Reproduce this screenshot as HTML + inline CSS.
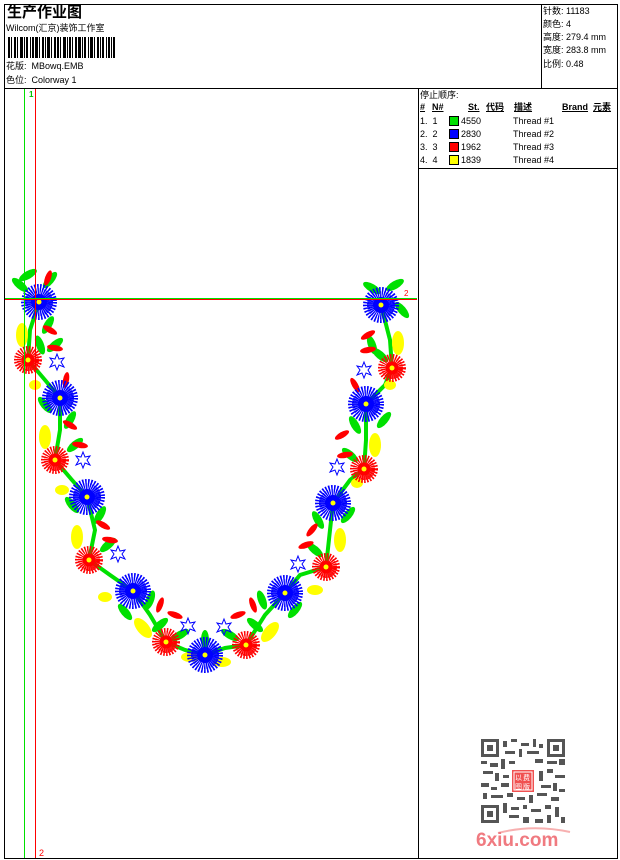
<!DOCTYPE html>
<html><head><meta charset="utf-8"><style>
body{margin:0;width:620px;height:860px;background:#fff;position:relative;overflow:hidden;font-family:"Liberation Sans","Noto Sans CJK SC",sans-serif;font-size:9px;color:#000}
.a{position:absolute;white-space:nowrap;line-height:11px}
.l{position:absolute;background:#000}
.b{font-weight:bold;text-decoration:underline}
.sw{position:absolute;width:8px;height:8px;border:1px solid #000}
</style></head><body>
<div class="l" style="left:4px;top:4px;width:614px;height:1px"></div>
<div class="l" style="left:4px;top:858px;width:614px;height:1px"></div>
<div class="l" style="left:4px;top:4px;width:1px;height:855px"></div>
<div class="l" style="left:617px;top:4px;width:1px;height:855px"></div>
<div class="l" style="left:4px;top:88px;width:614px;height:1px"></div>
<div class="l" style="left:541px;top:4px;width:1px;height:84px"></div>
<div class="l" style="left:418px;top:88px;width:1px;height:771px"></div>
<div class="l" style="left:418px;top:168px;width:200px;height:1px"></div>

<div class="a" style="left:7px;top:4px;font-size:15px;font-weight:bold;line-height:17px">生产作业图</div>
<div class="a" style="left:6px;top:23px">Wilcom(汇京)装饰工作室</div>
<svg style="position:absolute;left:8px;top:37px" width="110" height="21">
<g fill="#000">
<rect x="0" width="2" height="21"/><rect x="3" width="1" height="21"/><rect x="6" width="2" height="21"/><rect x="9" width="1" height="21"/><rect x="12" width="3" height="21"/><rect x="16" width="1" height="21"/><rect x="18" width="2" height="21"/><rect x="22" width="1" height="21"/><rect x="24" width="2" height="21"/><rect x="27" width="3" height="21"/><rect x="31" width="1" height="21"/><rect x="34" width="2" height="21"/><rect x="37" width="1" height="21"/><rect x="39" width="3" height="21"/><rect x="43" width="1" height="21"/><rect x="46" width="2" height="21"/><rect x="49" width="2" height="21"/><rect x="52" width="1" height="21"/><rect x="55" width="3" height="21"/><rect x="59" width="1" height="21"/><rect x="61" width="2" height="21"/><rect x="64" width="1" height="21"/><rect x="67" width="2" height="21"/><rect x="70" width="3" height="21"/><rect x="74" width="1" height="21"/><rect x="76" width="2" height="21"/><rect x="80" width="1" height="21"/><rect x="82" width="3" height="21"/><rect x="86" width="1" height="21"/><rect x="89" width="2" height="21"/><rect x="92" width="1" height="21"/><rect x="94" width="2" height="21"/><rect x="98" width="1" height="21"/><rect x="100" width="2" height="21"/><rect x="103" width="1" height="21"/><rect x="105" width="2" height="21"/>
</g></svg>
<div class="a" style="left:6px;top:61px">花版: &nbsp;MBowq.EMB</div>
<div class="a" style="left:6px;top:75px">色位: &nbsp;Colorway 1</div>

<div class="a" style="left:543px;top:6px">针数: 11183</div>
<div class="a" style="left:543px;top:19px">颜色: 4</div>
<div class="a" style="left:543px;top:32px">高度: 279.4 mm</div>
<div class="a" style="left:543px;top:45px">宽度: 283.8 mm</div>
<div class="a" style="left:543px;top:59px">比例: 0.48</div>

<div class="a" style="left:420px;top:90px">停止顺序:</div>
<div class="a b" style="left:420px;top:102px">#</div>
<div class="a b" style="left:432px;top:102px">N#</div>
<div class="a b" style="left:468px;top:102px">St.</div>
<div class="a b" style="left:486px;top:102px">代码</div>
<div class="a b" style="left:514px;top:102px">描述</div>
<div class="a b" style="left:562px;top:102px">Brand</div>
<div class="a b" style="left:593px;top:102px">元素</div>
<div class="a" style="left:420px;top:116px">1. &nbsp;1</div><div class="sw" style="left:449px;top:116px;background:#00e000"></div><div class="a" style="left:461px;top:116px">4550</div><div class="a" style="left:513px;top:116px">Thread #1</div>
<div class="a" style="left:420px;top:129px">2. &nbsp;2</div><div class="sw" style="left:449px;top:129px;background:#0000ff"></div><div class="a" style="left:461px;top:129px">2830</div><div class="a" style="left:513px;top:129px">Thread #2</div>
<div class="a" style="left:420px;top:142px">3. &nbsp;3</div><div class="sw" style="left:449px;top:142px;background:#ff0000"></div><div class="a" style="left:461px;top:142px">1962</div><div class="a" style="left:513px;top:142px">Thread #3</div>
<div class="a" style="left:420px;top:155px">4. &nbsp;4</div><div class="sw" style="left:449px;top:155px;background:#ffff00"></div><div class="a" style="left:461px;top:155px">1839</div><div class="a" style="left:513px;top:155px">Thread #4</div>

<svg style="position:absolute;left:0;top:0" width="418" height="858">
<defs>
<g id="bf"><circle r="10" fill="none" stroke="#0000ff" stroke-width="16" stroke-dasharray="1 0.9"/><circle r="9" fill="none" stroke="#0000ff" stroke-width="10" stroke-dasharray="0.8 0.8" transform="rotate(7)"/><circle r="8" fill="#0000ff"/><circle r="2.5" fill="#ffff00"/></g>
<g id="rf"><circle r="8" fill="none" stroke="#ff0000" stroke-width="12" stroke-dasharray="1 0.9"/><circle r="7" fill="none" stroke="#ff0000" stroke-width="8" stroke-dasharray="0.8 0.8" transform="rotate(9)"/><circle r="6.5" fill="#ff0000"/><circle r="2.5" fill="#ffff00"/></g>
<polygon id="st" points="0,-8 2,-3 7,-4 4,0 7,5 2,3 0,8 -2,3 -7,5 -4,0 -7,-4 -2,-3" fill="none" stroke="#0000ff" stroke-width="1"/>
<ellipse id="yb" rx="6" ry="12" fill="#ffff00"/>
<ellipse id="lf" rx="4" ry="10" fill="#00e000"/>
<ellipse id="rl" rx="3" ry="8" fill="#ff0000"/>
</defs>
<polyline fill="none" stroke="#00e000" stroke-width="4" points="39,302 30,330 28,360 45,380 60,398 60,430 55,460 72,480 87,497 95,530 89,560 110,575 133,591 150,615 166,642 185,650 205,655 225,648 246,645 265,615 285,593 300,575 326,567 330,530 333,503 350,480 364,469 366,440 366,404 385,385 392,368 390,340 381,305"/>
<g>
<use href="#lf" x="20" y="285" transform="rotate(-50 20 285)"/><use href="#lf" x="28" y="275" transform="rotate(60 28 275)"/><use href="#lf" x="50" y="280" transform="rotate(40 50 280)"/><use href="#lf" x="48" y="325" transform="rotate(30 48 325)"/><use href="#lf" x="40" y="345" transform="rotate(-20 40 345)"/><use href="#lf" x="70" y="420" transform="rotate(30 70 420)"/><use href="#lf" x="45" y="405" transform="rotate(-40 45 405)"/><use href="#lf" x="100" y="515" transform="rotate(30 100 515)"/><use href="#lf" x="72" y="505" transform="rotate(-40 72 505)"/><use href="#lf" x="150" y="600" transform="rotate(20 150 600)"/><use href="#lf" x="125" y="612" transform="rotate(-40 125 612)"/><use href="#lf" x="180" y="635" transform="rotate(60 180 635)"/><use href="#lf" x="205" y="640" transform="rotate(0 205 640)"/><use href="#lf" x="230" y="635" transform="rotate(-60 230 635)"/><use href="#lf" x="262" y="600" transform="rotate(-20 262 600)"/><use href="#lf" x="295" y="610" transform="rotate(40 295 610)"/><use href="#lf" x="318" y="520" transform="rotate(-30 318 520)"/><use href="#lf" x="348" y="515" transform="rotate(40 348 515)"/><use href="#lf" x="355" y="425" transform="rotate(-30 355 425)"/><use href="#lf" x="384" y="420" transform="rotate(40 384 420)"/><use href="#lf" x="372" y="345" transform="rotate(-20 372 345)"/><use href="#lf" x="395" y="285" transform="rotate(60 395 285)"/><use href="#lf" x="402" y="310" transform="rotate(-40 402 310)"/><use href="#lf" x="372" y="288" transform="rotate(-60 372 288)"/>
<use href="#lf" x="55" y="345" transform="rotate(50 55 345)"/><use href="#lf" x="75" y="445" transform="rotate(50 75 445)"/><use href="#lf" x="108" y="545" transform="rotate(50 108 545)"/><use href="#lf" x="160" y="625" transform="rotate(50 160 625)"/><use href="#lf" x="255" y="625" transform="rotate(-50 255 625)"/><use href="#lf" x="315" y="550" transform="rotate(-50 315 550)"/><use href="#lf" x="350" y="455" transform="rotate(-50 350 455)"/><use href="#lf" x="380" y="355" transform="rotate(-50 380 355)"/>
</g>
<g>
<use href="#rl" x="50" y="330" transform="rotate(-60 50 330)"/><use href="#rl" x="55" y="348" transform="rotate(-80 55 348)"/><use href="#rl" x="48" y="278" transform="rotate(20 48 278)"/><use href="#rl" x="70" y="425" transform="rotate(-60 70 425)"/><use href="#rl" x="80" y="445" transform="rotate(-80 80 445)"/><use href="#rl" x="66" y="380" transform="rotate(10 66 380)"/><use href="#rl" x="103" y="525" transform="rotate(-60 103 525)"/><use href="#rl" x="110" y="540" transform="rotate(-80 110 540)"/><use href="#rl" x="160" y="605" transform="rotate(20 160 605)"/><use href="#rl" x="175" y="615" transform="rotate(-70 175 615)"/><use href="#rl" x="238" y="615" transform="rotate(70 238 615)"/><use href="#rl" x="253" y="605" transform="rotate(-20 253 605)"/><use href="#rl" x="306" y="545" transform="rotate(70 306 545)"/><use href="#rl" x="312" y="530" transform="rotate(40 312 530)"/><use href="#rl" x="342" y="435" transform="rotate(60 342 435)"/><use href="#rl" x="345" y="455" transform="rotate(80 345 455)"/><use href="#rl" x="368" y="335" transform="rotate(60 368 335)"/><use href="#rl" x="368" y="350" transform="rotate(80 368 350)"/><use href="#rl" x="355" y="385" transform="rotate(-30 355 385)"/>
</g>
<g>
<use href="#yb" x="22" y="335"/><use href="#yb" x="45" y="437"/><use href="#yb" x="77" y="537"/><use href="#yb" x="143" y="628" transform="rotate(-40 143 628)"/><use href="#yb" x="270" y="632" transform="rotate(40 270 632)"/><use href="#yb" x="340" y="540"/><use href="#yb" x="375" y="445"/><use href="#yb" x="398" y="343"/>
<ellipse cx="35" cy="385" rx="6" ry="5" fill="#ffff00"/><ellipse cx="62" cy="490" rx="7" ry="5" fill="#ffff00"/><ellipse cx="105" cy="597" rx="7" ry="5" fill="#ffff00"/><ellipse cx="190" cy="657" rx="9" ry="5" fill="#ffff00"/><ellipse cx="222" cy="662" rx="9" ry="5" fill="#ffff00"/><ellipse cx="315" cy="590" rx="8" ry="5" fill="#ffff00"/><ellipse cx="357" cy="483" rx="6" ry="5" fill="#ffff00"/><ellipse cx="390" cy="385" rx="6" ry="5" fill="#ffff00"/>
</g>
<g>
<use href="#st" x="57" y="362"/><use href="#st" x="83" y="460"/><use href="#st" x="118" y="554"/><use href="#st" x="188" y="626"/><use href="#st" x="224" y="627"/><use href="#st" x="298" y="564"/><use href="#st" x="337" y="467"/><use href="#st" x="364" y="370"/>
</g>
<g>
<use href="#rf" x="28" y="360"/><use href="#rf" x="55" y="460"/><use href="#rf" x="89" y="560"/><use href="#rf" x="166" y="642"/><use href="#rf" x="246" y="645"/><use href="#rf" x="326" y="567"/><use href="#rf" x="364" y="469"/><use href="#rf" x="392" y="368"/>
</g>
<g>
<use href="#bf" x="39" y="302"/><use href="#bf" x="60" y="398"/><use href="#bf" x="87" y="497"/><use href="#bf" x="133" y="591"/><use href="#bf" x="205" y="655"/><use href="#bf" x="285" y="593"/><use href="#bf" x="333" y="503"/><use href="#bf" x="366" y="404"/><use href="#bf" x="381" y="305"/>
</g>
<rect x="24" y="89" width="1" height="769" fill="#00e000"/>
<rect x="35" y="89" width="1" height="769" fill="#ff0000"/>
<rect x="5" y="298" width="412" height="1" fill="#00e000"/>
<rect x="5" y="299" width="412" height="1" fill="#ff0000"/>
<text x="29" y="97" font-size="8" font-weight="bold" fill="#00c000" font-family="Liberation Sans">1</text>
<text x="39" y="856" font-size="9" fill="#ff0000" font-family="Liberation Sans">2</text>
<text x="404" y="296" font-size="8" fill="#ff0000" font-family="Liberation Sans">2</text>
</svg>

<svg style="position:absolute;left:481px;top:739px" width="84" height="84">
<g fill="#555">
<rect x="0" y="0" width="18" height="18"/><rect x="66" y="0" width="18" height="18"/><rect x="0" y="66" width="18" height="18"/>
</g>
<g fill="#fff"><rect x="3" y="3" width="12" height="12"/><rect x="69" y="3" width="12" height="12"/><rect x="3" y="69" width="12" height="12"/></g>
<g fill="#555"><rect x="6" y="6" width="6" height="6"/><rect x="72" y="6" width="6" height="6"/><rect x="6" y="72" width="6" height="6"/>
<rect x="22" y="2" width="4" height="6"/><rect x="30" y="0" width="6" height="3"/><rect x="40" y="4" width="8" height="3"/><rect x="52" y="0" width="3" height="8"/><rect x="58" y="5" width="4" height="4"/><rect x="24" y="12" width="10" height="3"/><rect x="38" y="10" width="3" height="8"/><rect x="46" y="12" width="12" height="3"/><rect x="0" y="22" width="6" height="3"/><rect x="9" y="24" width="8" height="4"/><rect x="20" y="20" width="4" height="10"/><rect x="28" y="22" width="6" height="3"/><rect x="54" y="20" width="8" height="4"/><rect x="66" y="22" width="10" height="3"/><rect x="78" y="20" width="6" height="6"/><rect x="2" y="32" width="10" height="3"/><rect x="14" y="34" width="4" height="8"/><rect x="22" y="36" width="6" height="3"/><rect x="58" y="32" width="4" height="10"/><rect x="66" y="30" width="6" height="4"/><rect x="74" y="36" width="10" height="3"/><rect x="0" y="44" width="8" height="4"/><rect x="10" y="48" width="6" height="3"/><rect x="20" y="44" width="8" height="4"/><rect x="60" y="46" width="10" height="3"/><rect x="72" y="44" width="4" height="8"/><rect x="78" y="50" width="6" height="3"/><rect x="2" y="54" width="4" height="6"/><rect x="10" y="56" width="12" height="3"/><rect x="26" y="54" width="6" height="4"/><rect x="36" y="58" width="8" height="3"/><rect x="48" y="56" width="4" height="8"/><rect x="56" y="54" width="10" height="3"/><rect x="70" y="58" width="8" height="4"/><rect x="22" y="64" width="4" height="10"/><rect x="30" y="68" width="8" height="3"/><rect x="42" y="66" width="4" height="4"/><rect x="50" y="70" width="10" height="3"/><rect x="64" y="66" width="6" height="4"/><rect x="74" y="68" width="4" height="10"/><rect x="28" y="76" width="10" height="3"/><rect x="42" y="78" width="6" height="6"/><rect x="54" y="80" width="8" height="4"/><rect x="66" y="76" width="4" height="8"/><rect x="80" y="78" width="4" height="6"/></g>
<rect x="31" y="31" width="22" height="22" fill="#f05050"/>
<rect x="33" y="33" width="18" height="18" fill="none" stroke="#fff" stroke-width="1"/>
<text x="34" y="41" font-size="7" fill="#fff" font-family="Noto Sans CJK SC,sans-serif">以</text><text x="42" y="41" font-size="7" fill="#fff" font-family="Noto Sans CJK SC,sans-serif">费</text>
<text x="34" y="50" font-size="7" fill="#fff" font-family="Noto Sans CJK SC,sans-serif">图</text><text x="42" y="50" font-size="7" fill="#fff" font-family="Noto Sans CJK SC,sans-serif">版</text>
</svg>
<svg style="position:absolute;left:478px;top:826px" width="100" height="8"><path d="M20 7 Q55 -2 92 6" fill="none" stroke="#f7b0b0" stroke-width="2"/></svg>
<div class="a" style="left:476px;top:831px;font-size:19px;line-height:20px;font-weight:bold;color:#f07a80">6xiu.com</div>
</body></html>
